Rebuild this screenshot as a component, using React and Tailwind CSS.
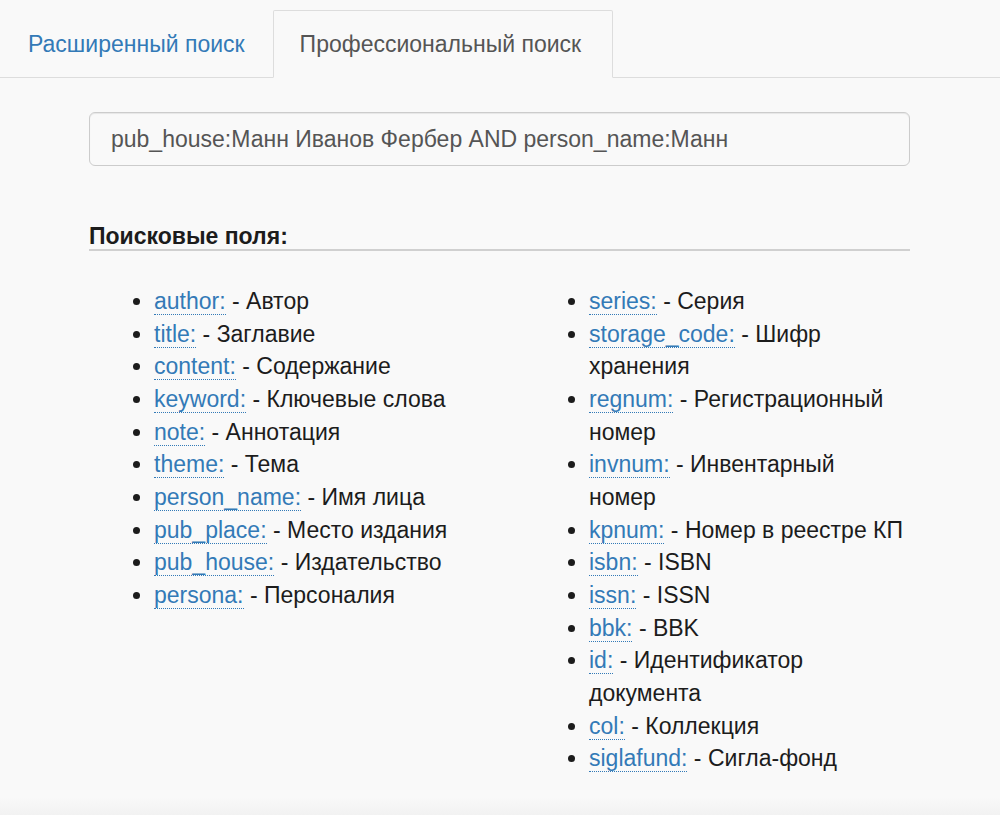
import React from 'react';

const leftFields = [
  ['author:', 'Автор'],
  ['title:', 'Заглавие'],
  ['content:', 'Содержание'],
  ['keyword:', 'Ключевые слова'],
  ['note:', 'Аннотация'],
  ['theme:', 'Тема'],
  ['person_name:', 'Имя лица'],
  ['pub_place:', 'Место издания'],
  ['pub_house:', 'Издательство'],
  ['persona:', 'Персоналия'],
];

const rightFields = [
  ['series:', 'Серия'],
  ['storage_code:', 'Шифр хранения'],
  ['regnum:', 'Регистрационный номер'],
  ['invnum:', 'Инвентарный номер'],
  ['kpnum:', 'Номер в реестре КП'],
  ['isbn:', 'ISBN'],
  ['issn:', 'ISSN'],
  ['bbk:', 'BBK'],
  ['id:', 'Идентификатор документа'],
  ['col:', 'Коллекция'],
  ['siglafund:', 'Сигла-фонд'],
];

const FieldList = ({ items }) => (
  <ul className="list-disc pl-[65px] text-[23px] leading-[32.67px] text-[#1c1c1c]">
    {items.map(([key, label]) => (
      <li key={key} className="marker:text-[#1c1c1c]">
        <span className="text-[#337ab7] border-b border-dotted border-[#337ab7] cursor-help">{key}</span>
        {' '}- {label}
      </li>
    ))}
  </ul>
);

export default function App() {
  return (
    <div
      className="min-h-[815px] bg-[#f9f9f9] flex flex-col"
      style={{ fontFamily: '"Liberation Sans", Arial, sans-serif' }}
    >
      {/* Tabs */}
      <div className="pt-[10px] flex border-b border-[#dddddd]">
        <a className="mr-[2px] pl-[27px] pr-[25px] py-[18px] leading-[30px] text-[23px] text-[#337ab7] border border-transparent -mb-px cursor-pointer">
          Расширенный поиск
        </a>
        <a className="pl-[26px] pr-[31px] py-[18px] leading-[30px] text-[23px] text-[#555555] bg-[#f9f9f9] border border-[#dddddd] border-b-transparent -mb-px rounded-t-[2px]">
          Профессиональный поиск
        </a>
      </div>

      <div className="px-[89px] pr-[90px]">
        {/* Query input */}
        <div className="mt-[34px] h-[54px] flex items-center px-[21px] rounded-[6px] border border-[#cccccc] bg-[#f9f9f9] shadow-[inset_0_1px_1px_rgba(0,0,0,0.075)] text-[23px] text-[#555555]">
          pub_house:Манн Иванов Фербер AND person_name:Манн
        </div>

        {/* Heading */}
        <h3 className="mt-[57px] text-[23px] leading-[26px] font-bold text-[#1c1c1c] border-b-2 border-[#d0d0d0]">
          Поисковые поля:
        </h3>

        {/* Field columns */}
        <div className="mt-[34px] flex">
          <div className="w-[435px] shrink-0">
            <FieldList items={leftFields} />
          </div>
          <div className="flex-1 pr-[4px]">
            <FieldList items={rightFields} />
          </div>
        </div>
      </div>

      <div className="flex-1" />
      <div className="h-[18px] bg-gradient-to-b from-[#f9f9f9] to-[#f2f2f2]" />
    </div>
  );
}
